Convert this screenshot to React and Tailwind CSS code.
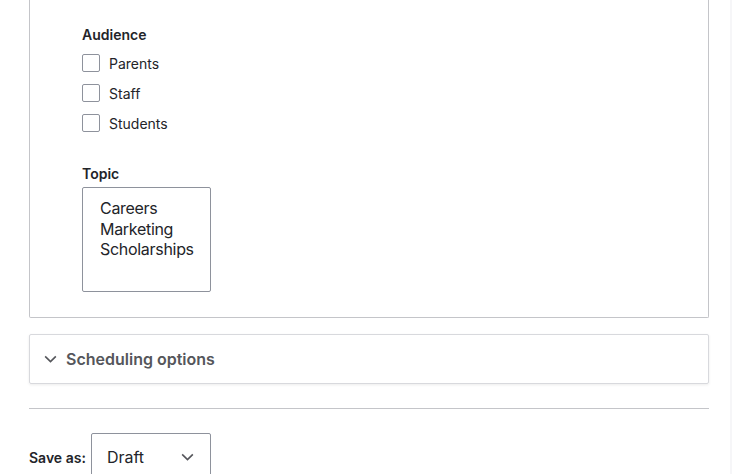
function Checkbox({ label }) {
  return (
    <label className="flex h-[30px] items-center">
      <span className="h-[18px] w-[18px] rounded-[2px] border border-[#8e929c] bg-white" />
      <span className="ml-[9px] text-[14px] text-[#232429]">{label}</span>
    </label>
  );
}

function Chevron({ className }) {
  return (
    <svg viewBox="0 0 14 9" className={className} fill="none">
      <path d="M1 1.5l6 6 6-6" stroke="currentColor" strokeWidth="1.8" />
    </svg>
  );
}

export default function App() {
  return (
    <div
      className="flex h-[474px] w-[732px] overflow-hidden bg-white text-[#232429]"
      style={{ fontFamily: "Inter, 'Noto Sans', sans-serif" }}
    >
      <div className="flex-1 pl-[29px] pr-[21px]">
        {/* Filter fieldset (top is scrolled out of view) */}
        <div className="rounded-b-[2px] border border-t-0 border-[#c4c5c9] pb-[25px] pl-[52px] pt-[26px]">
          <div className="h-[18px] text-[14px] font-semibold leading-[18px]">Audience</div>
          <div className="mt-[4px]">
            <Checkbox label="Parents" />
            <Checkbox label="Staff" />
            <Checkbox label="Students" />
          </div>

          <div className="mt-[27px] h-[18px] text-[14px] font-semibold leading-[18px]">Topic</div>
          <div className="mt-[4px] h-[105px] w-[129px] rounded-[2px] border border-[#8e929c] pl-[17px] pt-[10px] text-[16px] leading-[20.5px] tracking-[-0.3px]">
            <div>Careers</div>
            <div>Marketing</div>
            <div>Scholarships</div>
          </div>
        </div>

        {/* Scheduling options */}
        <div className="mt-[16px] flex h-[50px] items-center rounded-[2px] border border-[#d8d9dd] pl-[14px] shadow-[0_1px_3px_rgba(0,0,0,0.08)]">
          <Chevron className="h-[8px] w-[13px] text-[#55565b]" />
          <span className="ml-[9px] text-[16px] font-semibold text-[#55565b]">Scheduling options</span>
        </div>

        <div className="mt-[24px] h-px bg-[#c4c5c9]" />

        {/* Save as */}
        <div className="mt-[24px] flex items-center">
          <span className="text-[14px] font-semibold">Save as:</span>
          <div className="ml-[5px] flex h-[48px] w-[120px] items-center rounded-[2px] border border-[#8e929c] pl-[15px] pr-[16px]">
            <span className="flex-1 text-[16px]">Draft</span>
            <Chevron className="h-[8px] w-[13px] text-[#55565b]" />
          </div>
        </div>
      </div>
      <div className="w-[2px] bg-[#f6f6f8]" />
    </div>
  );
}
